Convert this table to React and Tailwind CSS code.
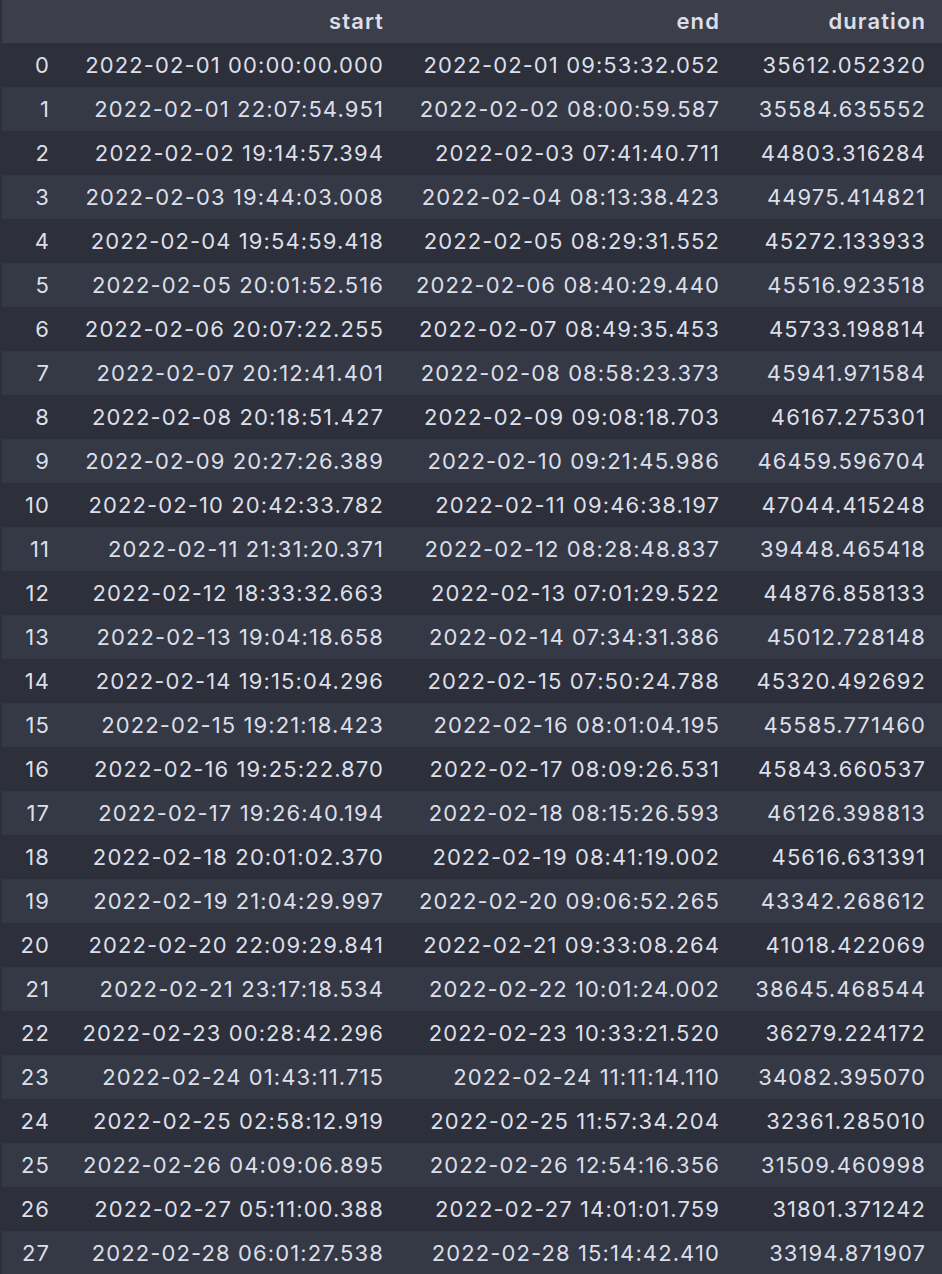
import React from 'react';

const rows = [
  ['2022-02-01 00:00:00.000', '2022-02-01 09:53:32.052', '35612.052320'],
  ['2022-02-01 22:07:54.951', '2022-02-02 08:00:59.587', '35584.635552'],
  ['2022-02-02 19:14:57.394', '2022-02-03 07:41:40.711', '44803.316284'],
  ['2022-02-03 19:44:03.008', '2022-02-04 08:13:38.423', '44975.414821'],
  ['2022-02-04 19:54:59.418', '2022-02-05 08:29:31.552', '45272.133933'],
  ['2022-02-05 20:01:52.516', '2022-02-06 08:40:29.440', '45516.923518'],
  ['2022-02-06 20:07:22.255', '2022-02-07 08:49:35.453', '45733.198814'],
  ['2022-02-07 20:12:41.401', '2022-02-08 08:58:23.373', '45941.971584'],
  ['2022-02-08 20:18:51.427', '2022-02-09 09:08:18.703', '46167.275301'],
  ['2022-02-09 20:27:26.389', '2022-02-10 09:21:45.986', '46459.596704'],
  ['2022-02-10 20:42:33.782', '2022-02-11 09:46:38.197', '47044.415248'],
  ['2022-02-11 21:31:20.371', '2022-02-12 08:28:48.837', '39448.465418'],
  ['2022-02-12 18:33:32.663', '2022-02-13 07:01:29.522', '44876.858133'],
  ['2022-02-13 19:04:18.658', '2022-02-14 07:34:31.386', '45012.728148'],
  ['2022-02-14 19:15:04.296', '2022-02-15 07:50:24.788', '45320.492692'],
  ['2022-02-15 19:21:18.423', '2022-02-16 08:01:04.195', '45585.771460'],
  ['2022-02-16 19:25:22.870', '2022-02-17 08:09:26.531', '45843.660537'],
  ['2022-02-17 19:26:40.194', '2022-02-18 08:15:26.593', '46126.398813'],
  ['2022-02-18 20:01:02.370', '2022-02-19 08:41:19.002', '45616.631391'],
  ['2022-02-19 21:04:29.997', '2022-02-20 09:06:52.265', '43342.268612'],
  ['2022-02-20 22:09:29.841', '2022-02-21 09:33:08.264', '41018.422069'],
  ['2022-02-21 23:17:18.534', '2022-02-22 10:01:24.002', '38645.468544'],
  ['2022-02-23 00:28:42.296', '2022-02-23 10:33:21.520', '36279.224172'],
  ['2022-02-24 01:43:11.715', '2022-02-24 11:11:14.110', '34082.395070'],
  ['2022-02-25 02:58:12.919', '2022-02-25 11:57:34.204', '32361.285010'],
  ['2022-02-26 04:09:06.895', '2022-02-26 12:54:16.356', '31509.460998'],
  ['2022-02-27 05:11:00.388', '2022-02-27 14:01:01.759', '31801.371242'],
  ['2022-02-28 06:01:27.538', '2022-02-28 15:14:42.410', '33194.871907'],
];

const App = () => {
  return (
    <div className="min-h-screen w-full bg-[#2d303a] pl-[2px] text-[22px] tracking-[0.05em] text-[#dcdfe9] font-['Inter',_'Liberation_Sans',_sans-serif]">
      {/* header */}
      <div className="grid grid-cols-[62px_336px_336px_206px] h-[43px] items-center bg-[#3c3f4a] font-semibold text-right">
        <div />
        <div className="pr-[16px]">start</div>
        <div className="pr-[16px]">end</div>
        <div className="pr-[16px]">duration</div>
      </div>

      {rows.map((r, i) => (
        <div
          key={i}
          className={`grid grid-cols-[62px_336px_336px_206px] h-[44px] items-center text-right ${
            i % 2 === 0 ? 'bg-[#2d303a]' : 'bg-[#353945]'
          }`}
        >
          <div className="pr-[14px]">{i}</div>
          <div className="pr-[16px]">{r[0]}</div>
          <div className="pr-[16px]">{r[1]}</div>
          <div className="pr-[16px]">{r[2]}</div>
        </div>
      ))}
    </div>
  );
};

export default App;
